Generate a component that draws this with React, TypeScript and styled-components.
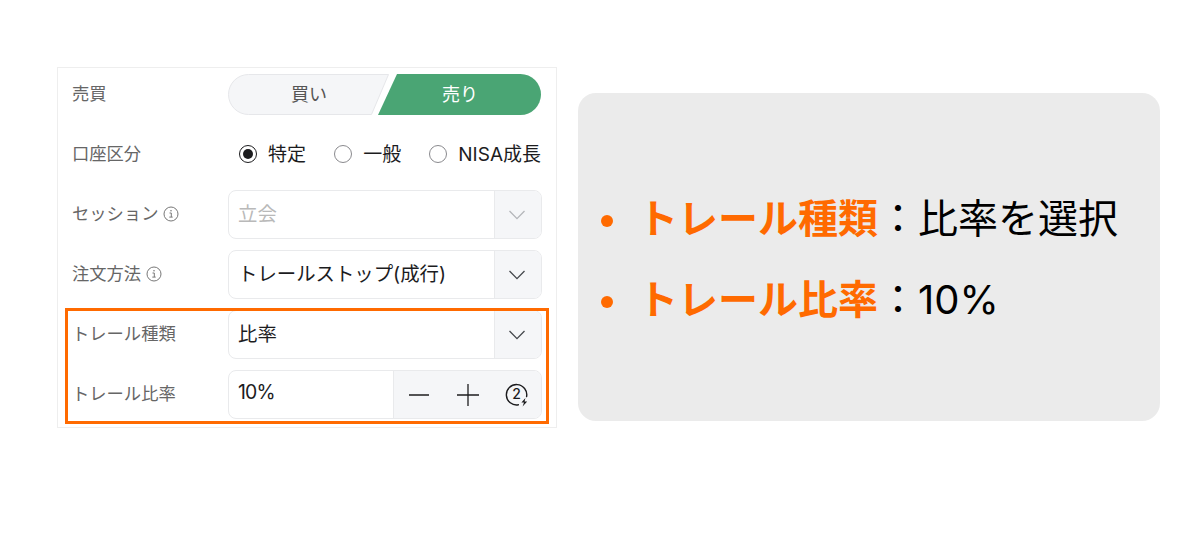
import styled, { createGlobalStyle } from "styled-components";

const GlobalStyle = createGlobalStyle`
  html, body {
    margin: 0;
    padding: 0;
    background: #fff;
  }
  body {
    font-family: "Inter", "Noto Sans CJK JP", sans-serif;
  }
`;

const InfoIcon = () => (
  <svg width="16" height="16" viewBox="0 0 16 16" fill="none">
    <circle cx="8" cy="8" r="7" stroke="#777" strokeWidth="1" />
    <path d="M6.5 7h1.8v4M6.3 11.1h3.4" stroke="#777" strokeWidth="1" />
    <circle cx="8" cy="4.8" r="0.8" fill="#777" />
  </svg>
);

const Chevron = ({ disabled }: { disabled?: boolean }) => (
  <svg width="18" height="10" viewBox="0 0 18 10" fill="none">
    <path d="M1.5 1 9 8.6 16.5 1" stroke={disabled ? "#b4b6ba" : "#44474c"} strokeWidth="1.3" />
  </svg>
);

const BoostIcon = () => (
  <svg width="24" height="24" viewBox="0 0 24 24" fill="none">
    <path
      d="M21.6 13.6A10.2 10.2 0 1 0 13.4 21.8"
      stroke="#1c1c1e"
      strokeWidth="1.4"
      strokeLinecap="round"
    />
    <text
      x="11.5"
      y="16.4"
      textAnchor="middle"
      fontSize="14"
      fontWeight="500"
      fontFamily="Inter"
      fill="#1c1c1e"
    >
      2
    </text>
    <path d="M20.4 15 16.4 19.6h2.6L17.6 23.6l4.6-5.2h-2.6z" fill="#1c1c1e" />
  </svg>
);

const App = () => {
  return (
    <Page>
      <GlobalStyle />
      <OrderPanel>
        <Row>
          <Label>売買</Label>
          <Segment>
            <SegmentItem>
              <svg width="162" height="41" viewBox="0 0 162 41" fill="none">
                <path
                  d="M20.5.5H160.5L143.5 40.5H20.5a20 20 0 0 1 0-40z"
                  fill="#f5f6f8"
                  stroke="#e6e7ea"
                />
              </svg>
              <SegmentText>買い</SegmentText>
            </SegmentItem>
            <SegmentItem $active>
              <svg width="163" height="41" viewBox="0 0 163 41" fill="none">
                <path d="M19 0H142.5a20.5 20.5 0 0 1 0 41H0z" fill="#4aa574" />
              </svg>
              <SegmentText $active>売り</SegmentText>
            </SegmentItem>
          </Segment>
        </Row>
        <Row>
          <Label>口座区分</Label>
          <RadioGroup>
            <RadioItem>
              <RadioMark $checked />
              特定
            </RadioItem>
            <RadioItem>
              <RadioMark />
              一般
            </RadioItem>
            <RadioItem>
              <RadioMark />
              NISA成長
            </RadioItem>
          </RadioGroup>
        </Row>
        <Row>
          <Label>
            セッション
            <InfoIcon />
          </Label>
          <Control>
            <Value $disabled>立会</Value>
            <ArrowCell>
              <Chevron disabled />
            </ArrowCell>
          </Control>
        </Row>
        <Row>
          <Label>
            注文方法
            <InfoIcon />
          </Label>
          <Control>
            <Value>トレールストップ(成行)</Value>
            <ArrowCell>
              <Chevron />
            </ArrowCell>
          </Control>
        </Row>
        <Highlight>
          <Row>
            <Label>トレール種類</Label>
            <Control>
              <Value>比率</Value>
              <ArrowCell>
                <Chevron />
              </ArrowCell>
            </Control>
          </Row>
          <Row>
            <Label>トレール比率</Label>
            <Control>
              <Value $tight>10%</Value>
              <Stepper>
                <StepCell>
                  <svg width="22" height="22" viewBox="0 0 22 22" fill="none">
                    <path d="M1 11h20" stroke="#1c1c1e" strokeWidth="1.3" />
                  </svg>
                </StepCell>
                <StepCell>
                  <svg width="22" height="22" viewBox="0 0 22 22" fill="none">
                    <path d="M0 11h22M11 0v22" stroke="#1c1c1e" strokeWidth="1.3" />
                  </svg>
                </StepCell>
                <StepCell>
                  <BoostIcon />
                </StepCell>
              </Stepper>
            </Control>
          </Row>
        </Highlight>
      </OrderPanel>
      <NotePanel>
        <NoteItem>
          <strong>トレール種類</strong>：比率を選択
        </NoteItem>
        <NoteItem>
          <strong>トレール比率</strong>：10%
        </NoteItem>
      </NotePanel>
    </Page>
  );
};

const Page = styled.div`
  width: 1200px;
  height: 540px;
  box-sizing: border-box;
  padding: 67px 40px 0 57px;
  display: flex;
  align-items: flex-start;
  gap: 21px;
  overflow: hidden;
`;

const OrderPanel = styled.div`
  width: 500px;
  height: 361px;
  box-sizing: border-box;
  border: 1px solid #eeeeee;
  padding: 2px 14px 0 14px;
  display: flex;
  flex-direction: column;
  gap: 11px;
`;

const Row = styled.div`
  display: grid;
  grid-template-columns: 156px 314px;
  align-items: center;
  height: 49px;
`;

const Label = styled.div`
  display: flex;
  align-items: center;
  gap: 5px;
  padding-bottom: 5px;
  font-size: 17.3px;
  color: #666666;
  white-space: nowrap;
  svg {
    margin-top: 4px;
  }
`;

const Segment = styled.div`
  display: flex;
  height: 41px;
`;

const SegmentItem = styled.div<{ $active?: boolean }>`
  position: relative;
  width: ${({ $active }) => ($active ? "163px" : "150px")};
  height: 41px;
  flex: none;
  svg {
    position: absolute;
    top: 0;
    left: 0;
  }
`;

const SegmentText = styled.span<{ $active?: boolean }>`
  position: absolute;
  top: 0;
  left: ${({ $active }) => ($active ? "64px" : "63px")};
  line-height: 41px;
  font-size: 18px;
  color: ${({ $active }) => ($active ? "#ffffff" : "#555555")};
`;

const RadioGroup = styled.div`
  display: flex;
  justify-content: space-between;
  padding-left: 11px;
  padding-right: 1px;
`;

const RadioItem = styled.div`
  display: flex;
  align-items: center;
  gap: 11px;
  padding-bottom: 4px;
  font-size: 19px;
  color: #1c1c1e;
  white-space: nowrap;
`;

const RadioMark = styled.span<{ $checked?: boolean }>`
  width: 18px;
  height: 18px;
  margin-top: 2px;
  box-sizing: border-box;
  border-radius: 50%;
  border: 1px solid ${({ $checked }) => ($checked ? "#1c1c1e" : "#8a8a8e")};
  display: flex;
  align-items: center;
  justify-content: center;
  &::after {
    content: "";
    width: 10px;
    height: 10px;
    border-radius: 50%;
    background: ${({ $checked }) => ($checked ? "#1c1c1e" : "transparent")};
  }
`;

const Control = styled.div`
  display: flex;
  height: 49px;
  box-sizing: border-box;
  border: 1.5px solid #e9eaec;
  border-radius: 8px;
  overflow: hidden;
  background: #fff;
`;

const Value = styled.div<{ $disabled?: boolean; $tight?: boolean }>`
  flex: 1;
  display: flex;
  align-items: center;
  padding-left: 9px;
  padding-bottom: 5px;
  font-size: 19.4px;
  letter-spacing: ${({ $tight }) => ($tight ? "-0.8px" : "0")};
  color: ${({ $disabled }) => ($disabled ? "#b9b9b9" : "#1c1c1e")};
  white-space: nowrap;
`;

const ArrowCell = styled.div`
  width: 47px;
  flex: none;
  box-sizing: border-box;
  padding-right: 2px;
  display: flex;
  align-items: center;
  justify-content: center;
  background: #f5f6f8;
  border-left: 1.5px solid #e9eaec;
`;

const Stepper = styled.div`
  width: 147px;
  flex: none;
  display: flex;
  background: #f5f6f8;
  border-left: 1.5px solid #e9eaec;
`;

const StepCell = styled.div`
  flex: 1;
  display: flex;
  align-items: center;
  justify-content: center;
`;

const Highlight = styled.div`
  position: relative;
  display: flex;
  flex-direction: column;
  gap: 11px;
  &::after {
    content: "";
    position: absolute;
    top: -2px;
    left: -7px;
    right: -7px;
    bottom: -5px;
    border: 3px solid #ff6a00;
    pointer-events: none;
  }
`;

const NotePanel = styled.ul`
  width: 582px;
  height: 328px;
  margin: 26px 0 0;
  box-sizing: border-box;
  padding: 4px 0 0 23px;
  list-style: none;
  background: #ebebeb;
  border-radius: 18px;
  display: flex;
  flex-direction: column;
  justify-content: center;
  gap: 22px;
`;

const NoteItem = styled.li`
  display: flex;
  align-items: center;
  font-size: 40px;
  line-height: 59px;
  color: #000;
  white-space: nowrap;
  &::before {
    content: "";
    width: 12px;
    height: 12px;
    margin-top: 4px;
    margin-right: 25px;
    border-radius: 50%;
    background: #ff6a00;
  }
  strong {
    color: #ff6a00;
    font-weight: 700;
  }
`;

export default App;
